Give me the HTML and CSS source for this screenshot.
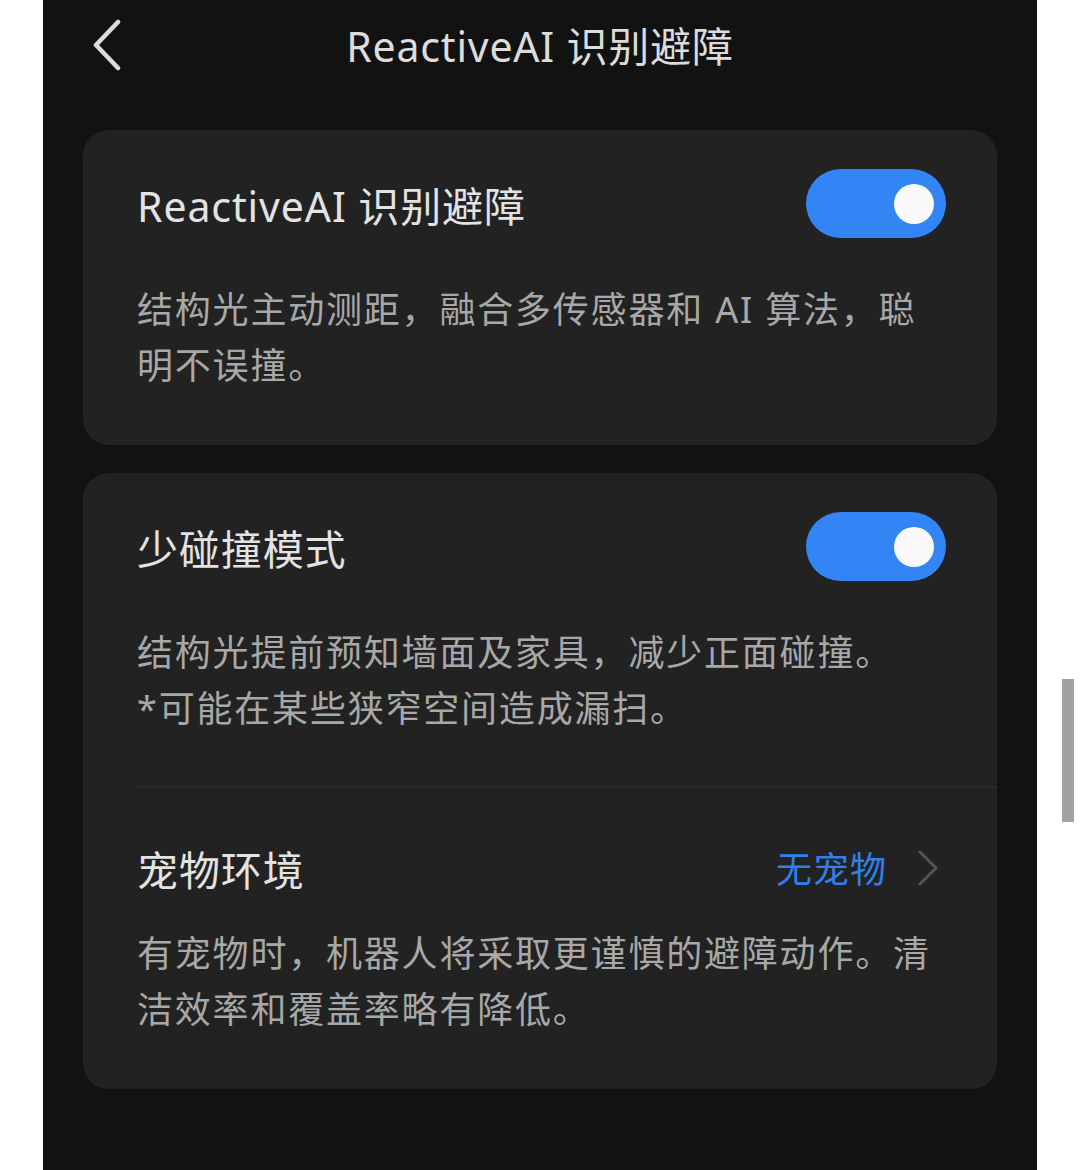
FILE: index.html
```html
<!DOCTYPE html>
<html lang="zh-CN">
<head>
  <meta charset="UTF-8">
  <title>ReactiveAI 识别避障</title>
  <link rel="stylesheet" href="styles.css">
</head>
<body>
  <div class="screen">
    <div class="nav">
      <svg class="back" width="30" height="52" viewBox="0 0 30 52">
        <polyline points="26,3 4,26 26,49" fill="none" stroke="#dcdcdc" stroke-width="4.5" stroke-linecap="round" stroke-linejoin="round"/>
      </svg>
      <div class="nav-title">ReactiveAI 识别避障</div>
      <div></div>
    </div>

    <div class="card">
      <div class="row">
        <span class="label">ReactiveAI 识别避障</span>
        <span class="switch on"><span class="knob"></span></span>
      </div>
      <p class="desc">结构光主动测距，融合多传感器和 AI 算法，聪明不误撞。</p>
    </div>

    <div class="card">
      <div class="row">
        <span class="label">少碰撞模式</span>
        <span class="switch on"><span class="knob"></span></span>
      </div>
      <p class="desc">结构光提前预知墙面及家具，减少正面碰撞。<br>*可能在某些狭窄空间造成漏扫。</p>
      <div class="divider"></div>
      <div class="row pet">
        <span class="label">宠物环境</span>
        <span class="value">无宠物
          <svg width="22" height="36" viewBox="0 0 22 36">
            <polyline points="3,2 19,18 3,34" fill="none" stroke="#555" stroke-width="3" stroke-linecap="round" stroke-linejoin="round"/>
          </svg>
        </span>
      </div>
      <p class="desc">有宠物时，机器人将采取更谨慎的避障动作。清洁效率和覆盖率略有降低。</p>
    </div>
  </div>
  <div class="scrollbar"></div>
</body>
</html>
```

FILE: styles.css
```css
body {
  margin: 0;
  background: #fff;
  font-family: "Noto Sans", "Noto Sans CJK SC", sans-serif;
}

.screen {
  margin-left: 43px;
  width: 994px;
  height: 1170px;
  background: #121212;
  padding: 0 40px;
  box-sizing: border-box;
  overflow: hidden;
}

.nav {
  height: 88px;
  display: grid;
  grid-template-columns: 1fr auto 1fr;
  align-items: center;
  margin: 0 -40px;
  padding: 0 49px;
}

.back { display: block; margin-top: 2px; }

.nav-title {
  font-size: 41px;
  color: #dcdcdc;
  letter-spacing: 0.8px;
}

.card {
  background: #222222;
  border-radius: 26px;
  padding: 39px 51px 51px 54px;
  margin-top: 42px;
}
.card + .card { margin-top: 28px; }

.row {
  display: flex;
  justify-content: space-between;
  align-items: center;
  height: 69px;
}

.label {
  font-size: 41px;
  color: #e3e3e3;
  letter-spacing: 0.9px;
}

.switch {
  width: 140px;
  height: 69px;
  border-radius: 35px;
  background: #3385f5;
  display: flex;
  align-items: center;
  justify-content: flex-end;
  padding-right: 12px;
  box-sizing: border-box;
}
.knob {
  width: 40px;
  height: 40px;
  border-radius: 50%;
  background: #fafafa;
}

.desc {
  margin: 44px 0 0;
  max-width: 800px;
  font-size: 36px;
  line-height: 56px;
  letter-spacing: 1.8px;
  color: #a8a8a8;
}

.divider {
  height: 2px;
  background: #2b2b2b;
  margin: 49px -51px 0 0;
}

.row.pet { margin-top: 45px; }
.row.pet + .desc { margin-top: 24px; }

.value {
  display: flex;
  align-items: center;
  gap: 30px;
  font-size: 36px;
  color: #2f80ea;
  letter-spacing: 1px;
  margin-right: 7px;
}

.scrollbar {
  position: absolute;
  left: 1062px;
  top: 679px;
  width: 12px;
  height: 143px;
  background: #a0a1a2;
}
```
